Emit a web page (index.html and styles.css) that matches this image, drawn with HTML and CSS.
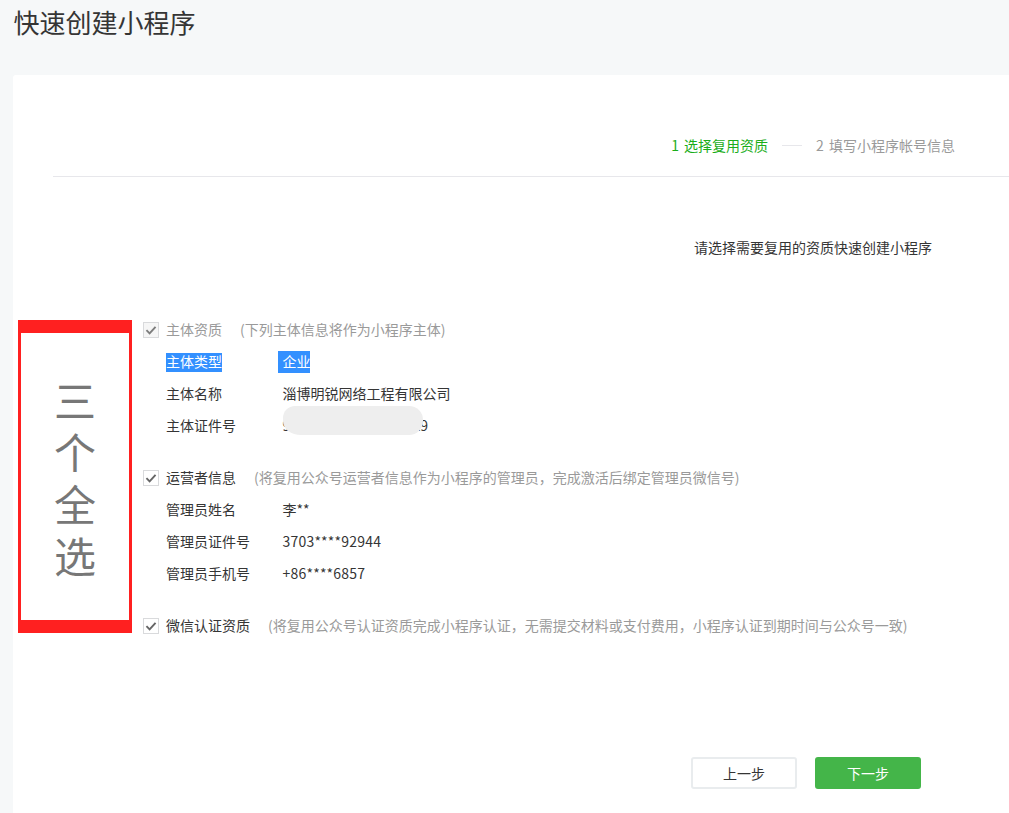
FILE: index.html
```html
<!DOCTYPE html>
<html lang="zh-CN">
<head>
  <meta charset="UTF-8">
  <title>快速创建小程序</title>
  <link rel="stylesheet" href="styles.css">
</head>
<body>
  <h1 class="page-title">快速创建小程序</h1>

  <div class="card">
    <div class="steps">
      <span class="step step-active">1 选择复用资质</span>
      <span class="step-line"></span>
      <span class="step">2 填写小程序帐号信息</span>
    </div>

    <p class="intro">请选择需要复用的资质快速创建小程序</p>

    <div class="section">
      <div class="section-head">
        <span class="check check-disabled">
          <svg viewBox="0 0 16 16"><path d="M2.8 8.2l3.6 3.6 6.8-7.4"/></svg>
        </span>
        <span class="section-title title-disabled">主体资质</span>
        <span class="section-note">(下列主体信息将作为小程序主体)</span>
      </div>
      <div class="row row-selected">
        <span class="row-label"><span class="selected">主体类型</span></span>
        <span class="row-value"><span class="selected selected-cut">企业</span></span>
      </div>
      <div class="row">
        <span class="row-label">主体名称</span>
        <span class="row-value">淄博明锐网络工程有限公司</span>
      </div>
      <div class="row">
        <span class="row-label">主体证件号</span>
        <span class="row-value">9<span class="mask-gap"></span>X9<span class="mask"></span></span>
      </div>
    </div>

    <div class="section">
      <div class="section-head">
        <span class="check">
          <svg viewBox="0 0 16 16"><path d="M2.8 8.2l3.6 3.6 6.8-7.4"/></svg>
        </span>
        <span class="section-title">运营者信息</span>
        <span class="section-note">(将复用公众号运营者信息作为小程序的管理员<span class="comma">，</span>完成激活后绑定管理员微信号)</span>
      </div>
      <div class="row">
        <span class="row-label">管理员姓名</span>
        <span class="row-value">李**</span>
      </div>
      <div class="row">
        <span class="row-label">管理员证件号</span>
        <span class="row-value row-number">3703****92944</span>
      </div>
      <div class="row">
        <span class="row-label">管理员手机号</span>
        <span class="row-value row-number">+86****6857</span>
      </div>
    </div>

    <div class="section">
      <div class="section-head">
        <span class="check">
          <svg viewBox="0 0 16 16"><path d="M2.8 8.2l3.6 3.6 6.8-7.4"/></svg>
        </span>
        <span class="section-title">微信认证资质</span>
        <span class="section-note">(将复用公众号认证资质完成小程序认证<span class="comma">，</span>无需提交材料或支付费用<span class="comma">，</span>小程序认证到期时间与公众号一致)</span>
      </div>
    </div>

    <div class="actions">
      <a class="btn">上一步</a>
      <a class="btn btn-primary">下一步</a>
    </div>

    <div class="callout"><span class="callout-text">三个全选</span></div>
  </div>
</body>
</html>
```

FILE: styles.css
```css
html, body {
  height: 100%;
}
body {
  margin: 0;
  background: #f6f8f9;
  color: #353535;
  font-family: "Noto Sans CJK SC", "Liberation Sans", sans-serif;
  font-size: 14px;
  overflow: hidden;
}
.page-title {
  margin: 0;
  height: 75px;
  padding-left: 13.5px;
  font-size: 26px;
  font-weight: 400;
  line-height: 44px;
}
.card {
  position: relative;
  height: 738px;
  margin-left: 13px;
  background: #fff;
  border-radius: 3px 0 0 0;
}
.steps {
  display: flex;
  align-items: center;
  justify-content: flex-end;
  gap: 14px;
  margin-left: 40px;
  padding: 54px 54px 15px 0;
  line-height: 32px;
  word-spacing: 2px;
  border-bottom: 1px solid #e7e7eb;
}
.step {
  color: #9a9a9a;
}
.step-active {
  color: #1aad19;
}
.step-line {
  width: 20px;
  height: 1px;
  background: #e7e7eb;
}
.intro {
  margin: 55px 0 50px;
  padding: 0 0 2px 681px;
  line-height: 30px;
}
.section {
  margin: 0 0 20px 130px;
}
.section-head {
  display: flex;
  align-items: center;
  height: 32px;
}
.check {
  display: flex;
  box-sizing: border-box;
  width: 16px;
  height: 16px;
  margin-right: 7px;
  background: #fff;
  border: 1px solid #d9dadc;
}
.check svg {
  width: 14px;
  height: 14px;
  fill: none;
  stroke: #666;
  stroke-width: 2.2;
}
.check-disabled {
  background: #f6f6f6;
}
.check-disabled svg {
  stroke: #7d7d7d;
}
.section-title {
  margin: 0 18px 2px 0;
}
.section-note {
  margin-bottom: 2px;
}
.comma {
  font-family: "Noto Sans CJK TC", sans-serif;
}
.title-disabled,
.section-note {
  color: #9a9a9a;
}
.row {
  display: flex;
  align-items: center;
  box-sizing: border-box;
  height: 32px;
  padding-left: 23px;
  padding-bottom: 2px;
}
.row-selected {
  padding-bottom: 0;
}
.row-selected .row-label,
.row-selected .row-value {
  display: flex;
}
.row-label {
  width: 116.5px;
}
.row-value {
  position: relative;
  line-height: 30px;
}
.row-number {
  letter-spacing: 0.2px;
}
.selected {
  height: 19px;
  line-height: 17px;
  background: #3390ff;
  color: #fff;
}
.selected-cut {
  width: 27.5px;
  height: 22px;
  margin-left: -5px;
  padding-left: 5px;
  line-height: 20px;
  overflow: hidden;
  white-space: nowrap;
}
.mask-gap {
  display: inline-block;
  width: 122px;
}
.mask {
  position: absolute;
  left: 0;
  top: -4px;
  width: 140px;
  height: 29px;
  background: #eeeeee;
  border-radius: 12px 14px 14px 18px / 12px 14px 14px 14px;
}
.actions {
  display: flex;
  gap: 18px;
  margin-top: 115px;
  padding-left: 678px;
}
.btn {
  box-sizing: border-box;
  width: 106px;
  height: 32px;
  line-height: 28px;
  text-align: center;
  color: #353535;
  background: #fff;
  border: 2px solid #e9ecee;
  border-radius: 3px;
}
.btn-primary {
  color: #fff;
  background: #44b549;
  border-color: #44b549;
}
.callout {
  position: absolute;
  left: 5px;
  top: 245px;
  display: flex;
  justify-content: center;
  box-sizing: border-box;
  width: 114px;
  height: 313px;
  padding-top: 47px;
  border: solid #ff2020;
  border-width: 13px 3px;
  color: #777;
  font-size: 42px;
}
.callout-text {
  writing-mode: vertical-rl;
  text-orientation: upright;
  letter-spacing: 10px;
}
```
